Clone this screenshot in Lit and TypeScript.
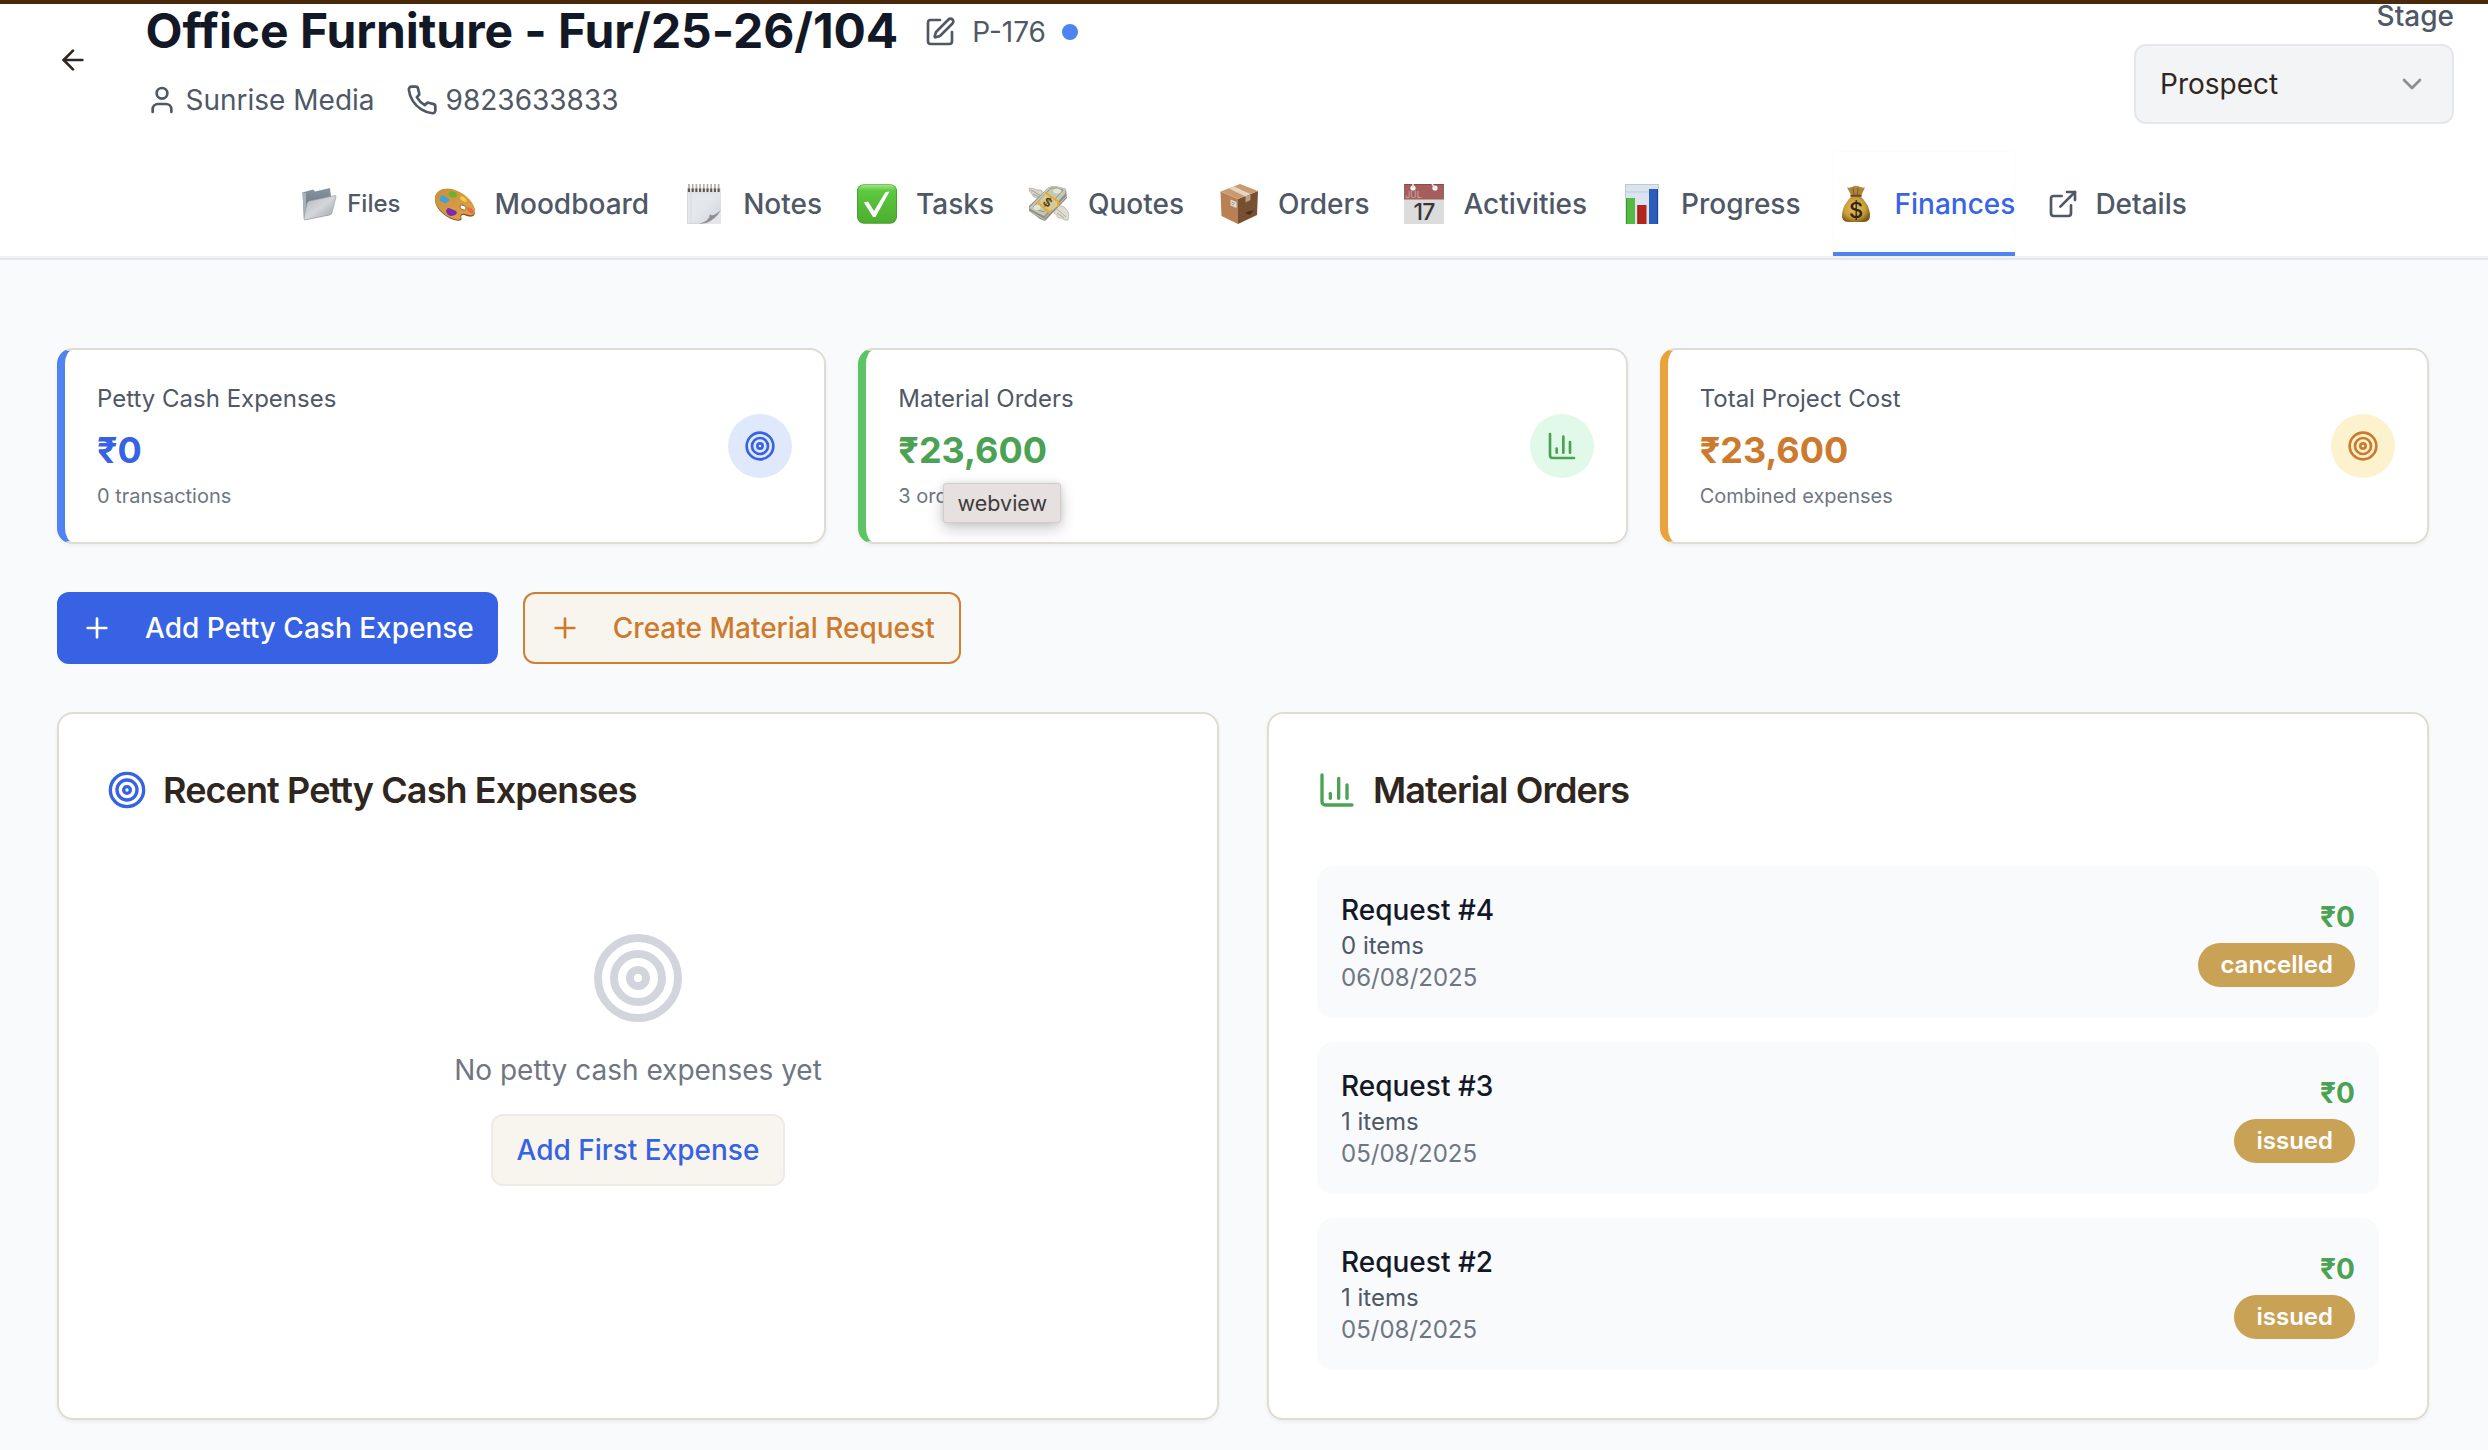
import { LitElement, html, svg, css } from "lit";
import { customElement } from "lit/decorators.js";

const stroke = (body: unknown, cls = "") => html`
  <svg class="icon ${cls}" viewBox="0 0 24 24" fill="none" stroke="currentColor"
    stroke-width="2" stroke-linecap="round" stroke-linejoin="round">${body}</svg>`;

const target = svg`<circle cx="12" cy="12" r="10"/><circle cx="12" cy="12" r="6"/><circle cx="12" cy="12" r="2"/>`;
const chart = svg`<path d="M3 3v16a2 2 0 0 0 2 2h16"/><path d="M18 17V9"/><path d="M13 17V5"/><path d="M8 17v-3"/>`;
const plus = svg`<path d="M5 12h14"/><path d="M12 5v14"/>`;
const arrowLeft = svg`<path d="m12 19-7-7 7-7"/><path d="M19 12H5"/>`;
const user = svg`<path d="M19 21v-2a4 4 0 0 0-4-4H9a4 4 0 0 0-4 4v2"/><circle cx="12" cy="7" r="4"/>`;
const phone = svg`<path d="M22 16.92v3a2 2 0 0 1-2.18 2 19.79 19.79 0 0 1-8.63-3.07 19.5 19.5 0 0 1-6-6 19.79 19.79 0 0 1-3.07-8.67A2 2 0 0 1 4.11 2h3a2 2 0 0 1 2 1.72 12.84 12.84 0 0 0 .7 2.81 2 2 0 0 1-.45 2.11L8.09 9.91a16 16 0 0 0 6 6l1.27-1.27a2 2 0 0 1 2.11-.45 12.84 12.84 0 0 0 2.81.7A2 2 0 0 1 22 16.92z"/>`;
const pen = svg`<path d="M12 3H5a2 2 0 0 0-2 2v14a2 2 0 0 0 2 2h14a2 2 0 0 0 2-2v-7"/><path d="M18.375 2.625a1 1 0 0 1 3 3l-9.013 9.014a2 2 0 0 1-.853.505l-2.873.84a.5.5 0 0 1-.62-.62l.84-2.873a2 2 0 0 1 .506-.852z"/>`;
const external = svg`<path d="M15 3h6v6"/><path d="M10 14 21 3"/><path d="M18 13v6a2 2 0 0 1-2 2H5a2 2 0 0 1-2-2V8a2 2 0 0 1 2-2h6"/>`;
const chevron = svg`<path d="m6 9 6 6 6-6"/>`;

const picture = (body: unknown) => html`<svg class="picture" viewBox="0 0 44 40">${body}</svg>`;

const folder = html`<svg class="folder" viewBox="0 0 36 34">
  <defs>
    <linearGradient id="fb" x1="0" y1="0" x2="0" y2="1"><stop offset="0" stop-color="#8795a0"/><stop offset="1" stop-color="#5a6b78"/></linearGradient>
    <linearGradient id="ff" x1="0" y1="0" x2="1" y2="1"><stop offset="0" stop-color="#b3b8be"/><stop offset=".5" stop-color="#d4d6da"/><stop offset="1" stop-color="#999ea7"/></linearGradient>
  </defs>
  <path d="M1.500 5.500 12 2.500 14 4.500 29 1 30 10 28 28 3 32.500z" fill="url(#fb)"/>
  <path d="M1.500 5.500 3 32.500 5 30V6z" fill="#a9b2ba"/>
  <path d="M6 16 Q6.500 14.500 8.500 14L34 8.500Q35.200 8.500 35 10L31 25.500Q30.500 27.500 28.500 28L4 33Q2.600 33 3 31z" fill="url(#ff)" stroke="#8e959d" stroke-width=".6"/>
</svg>`;

const palette = svg`
  <defs><linearGradient id="pl" x1="0" y1="0" x2="1" y2="1"><stop offset="0" stop-color="#c98f3c"/><stop offset="1" stop-color="#e0a34d"/></linearGradient></defs>
  <path d="M2 14C3 7 11 3.500 19 5.500 31 8.500 42 19 42 28 42 34 36 33 32.500 31.500 29 30.500 27.500 31.500 28.500 34 29.500 36.500 26 37.500 21 36 10 32.500 1 23 2 14z" fill="#84551d"/>
  <path d="M2 13C3 6.500 11 3 19 5 31 8 42 18.500 42 27 42 32.500 36 31.500 32.500 30 29 29 26.500 30.500 27.500 33 28.500 35.500 26 36.500 21 35 10 31.500 1 22 2 13z" fill="url(#pl)"/>
  <ellipse cx="30" cy="23.500" rx="3.300" ry="2.200" transform="rotate(25 30 23.500)" fill="#fff" stroke="#875719" stroke-width=".8"/>
  <path d="M16 9q1-3 4-1.500l3 1q2 4-1 5.500l-4-1q-3-1-2-4z" fill="#68b52c"/>
  <path d="M7 14q1-4 4-2l4 2q3 2 0 3.500l-2 2-3-1q-4-1-3-4.500z" fill="#40a3d7"/>
  <path d="M13 27q1-4 4-2.500l5 2q3 1 1 4l-4 1.500q-5 0-6-5z" fill="#7b2bab"/>
  <path d="M27 13q2-2 5 1 3 4 1 4-6-1-6-5z" fill="#f0cf39"/>
  <path d="M34 24q2-2 5 1 3 4 1 5-6-2-6-6z" fill="#ea694a"/>`;

const notepad = svg`
  <defs><linearGradient id="np" x1="0" y1="0" x2="1" y2="1"><stop offset=".5" stop-color="#e4e7ec"/><stop offset="1" stop-color="#cfd2d8"/></linearGradient></defs>
  <path d="M5 4H39V26L24 40H5z" fill="url(#np)"/>
  <path d="M5.500 4V39.500H24" fill="none" stroke="#d3d6db" stroke-width="1"/>
  <path d="M5 9H39M9 9V39" stroke="#d5d8df" stroke-width=".7"/>
  <path d="M39 26 38 40H16Q24 38 27 31 31 34 39 26z" fill="#dadcdf"/>
  <path d="M39 26Q30 34 28 30 28 37 17 40L24 39Q33 36 39 26z" fill="#8d8f92"/>
  <path d="M39 27Q34 36 23 40H39z" fill="#e4e6e9"/>
  ${[7, 10.700, 14.400, 18.100, 21.800, 25.500, 29.200, 32.900, 36.600].map(x => svg`<path d="M${x} 0V7" stroke="#b0aca7" stroke-width="1.700"/><path d="M${x} 4.500V8" stroke="#5e564e" stroke-width="2.100"/>`)}`;

const check = svg`
  <defs><linearGradient id="ck" x1="0" y1="0" x2="0" y2="1"><stop offset="0" stop-color="#a0e783"/><stop offset=".16" stop-color="#5cc83f"/><stop offset="1" stop-color="#4dae2e"/></linearGradient></defs>
  <rect x="2" y=".2" width="40" height="39.600" rx="7" fill="#3f9d2a"/>
  <rect x="2.800" y=".8" width="38.400" height="38" rx="6.500" fill="url(#ck)"/>
  <path d="M9 18.500 13 17.500 19 27 30.500 8 34.500 7.500 20.500 33H18z" fill="#fff"/>`;

const cash = svg`
  <path d="M2 4Q7 4 10 6 16 5 17 10L18 14 13 18Q10 17 10 14 5 13 5 10 2 9 2 4z" fill="#d6d2c8" stroke="#aaa69a" stroke-width=".6"/>
  <path d="M4 6 14 12M6 10 14 14" stroke="#9b968a" stroke-width=".8"/>
  <path d="M31 22Q37 21 39 25 43 28 41 36 37 37 35 34 30 35 30 31 26 30 27 26z" fill="#dfdcd4" stroke="#aaa69a" stroke-width=".6"/>
  <path d="M30 25 39 33M30 29 37 34" stroke="#a39e93" stroke-width=".8"/>
  <path d="M22 3Q30 1 39 5L40 14 18 37Q13 36 9 32L2 27V22z" fill="#8f9284"/>
  <path d="M22 3Q30 1 39 5L38 10 17 32Q10 29 2 24z" fill="#c5c7b5"/>
  <path d="M24 4Q30 3 36 6L17 28Q10 26 6 23z" fill="none" stroke="#8a8d7b" stroke-width=".8"/>
  <ellipse cx="30" cy="7" rx="4" ry="2.500" fill="#e4e4d8"/><ellipse cx="10" cy="23.500" rx="3.600" ry="2.500" fill="#e4e4d8"/>
  <path d="M2 27 18 35.500M18 33.500 40 12" stroke="#c7c9bb" stroke-width=".9"/>
  <path d="M19 9 30 17V22L22 29 11 19z" fill="#d8c99a"/>
  <path d="M18 8.500 31 17.500V23" fill="none" stroke="#e3ac2c" stroke-width="2"/>
  <path d="M10 17.500 22 28 25 26" fill="none" stroke="#e3ac2c" stroke-width="2"/>
  <text x="20.500" y="22.500" text-anchor="middle" transform="rotate(35 20.500 18.500)" font-family="Inter, sans-serif" font-size="12" font-weight="700" fill="#594616">$</text>`;

const box = svg`
  <path d="M3.500 7.500 21 15V40L4.500 32z" fill="#ba8053"/>
  <path d="M41 7 21 15V40L40 31z" fill="#765030"/>
  <path d="M3.500 7.500 23 0 41 7 21 15z" fill="#c99a70"/>
  <path d="M12 4.500 17 2.500 33.500 10 28.500 12.500z" fill="#e8d5bd"/>
  <path d="M28.500 12.500 33.500 10.500V16L28.500 18.500z" fill="#b8a089"/>
  <path d="M13.500 15.500 19.500 18V24L13.500 21.500z" fill="#e1dcd8"/>
  <path d="M14.500 18 18 19.500M14.500 20 17 21" stroke="#858585" stroke-width=".8"/>
  <path d="M28 29 31 27.500 34 27 37 26 33 31z" fill="#48301c"/>`;

const calendar = svg`
  <rect x="2" y="0" width="40" height="40" fill="#dcdcdc"/>
  <rect x="2" y="0" width="40" height="15.500" fill="#a65e5d"/>
  <path d="M2 .5H42" stroke="#884c4b"/>
  <circle cx="11" cy="4" r="2.600" fill="#fff"/><circle cx="33" cy="4" r="2.600" fill="#fff"/>
  <path d="M11 0V4M30 0 33 4" stroke="#e3e0df" stroke-width="1.600"/>
  <text x="3.500" y="13.500" font-family="Inter, sans-serif" font-size="8.500" font-weight="400" fill="#d4a7a6">JUL</text>
  <text x="22" y="36" text-anchor="middle" font-family="Inter, sans-serif" font-size="23" font-weight="500" letter-spacing="-.8" fill="#373737">17</text>`;

const bars = svg`
  <rect x="5" y="0" width="34" height="40" fill="#dbe4ee"/>
  <path d="M5 .5H39M5.500 0V14M5 8H39M38.500 0V5" stroke="#bccad8" stroke-width="1"/>
  <rect x="6" y="14" width="9" height="26" fill="#56ba42"/><rect x="17.500" y="21" width="9" height="19" fill="#b5251b"/>
  <rect x="29" y="5" width="9" height="35" fill="#2a5dbc"/>
  <path d="M6.500 14V40" stroke="#3d922e"/><path d="M18 21V40" stroke="#871812"/><path d="M37.500 5V40" stroke="#1b4590"/>`;

const moneybag = svg`
  <defs><radialGradient id="mb" cx=".45" cy=".45" r=".6"><stop offset="0" stop-color="#e4c062"/><stop offset=".65" stop-color="#c79c39"/><stop offset="1" stop-color="#805b19"/></radialGradient></defs>
  <path d="M13 3.500Q17 4 19 2.500 22 1 25 2.500 28 4 31 3.500L27 12H17.500z" fill="#b0853c"/>
  <path d="M19 4 20 11M24 4 23.500 11" stroke="#7b5821" stroke-width="1"/>
  <path d="M17.500 12.500H26.500Q35 20 36 30 36.500 38 30 38H14Q7.500 38 8 30 9 20 17.500 12.500z" fill="url(#mb)"/>
  <path d="M16.500 11.800H27.500" stroke="#654815" stroke-width="2"/>
  <text x="22" y="33.500" text-anchor="middle" font-family="Inter, sans-serif" font-size="22" font-weight="500" fill="#2f2511">$</text>`;

const tabs = [
  { label: "Moodboard", art: palette },
  { label: "Notes", art: notepad },
  { label: "Tasks", art: check },
  { label: "Quotes", art: cash },
  { label: "Orders", art: box },
  { label: "Activities", art: calendar },
  { label: "Progress", art: bars },
  { label: "Finances", art: moneybag, active: true },
];

const stats = [
  { tone: "blue", label: "Petty Cash Expenses", value: "₹0", note: "0 transactions", icon: target },
  { tone: "green", label: "Material Orders", value: "₹23,600", note: "3 orders", icon: chart, tip: "webview" },
  { tone: "amber", label: "Total Project Cost", value: "₹23,600", note: "Combined expenses", icon: target },
];

const orders = [
  { name: "Request #4", items: "0 items", date: "06/08/2025", amount: "₹0", status: "cancelled" },
  { name: "Request #3", items: "1 items", date: "05/08/2025", amount: "₹0", status: "issued" },
  { name: "Request #2", items: "1 items", date: "05/08/2025", amount: "₹0", status: "issued" },
];

@customElement("app-root")
export class AppRoot extends LitElement {
  static styles = css`
    :host {
      display: block; box-sizing: border-box; height: 1450px; overflow: hidden;
      background: #f9fafc; color: #2f2620;
      font: 400 28px/40px Inter, "Liberation Sans", sans-serif;
    }
    * { box-sizing: border-box; }
    svg { display: block; flex: none; }
    .icon { width: 32px; height: 32px; }
    .s40 { width: 40px; height: 40px; }
    .s96 { width: 96px; height: 96px; }

    header { background: #fff; border-top: 4px solid #4b290d; border-bottom: 2px solid #e5e7ea; height: 260px; box-shadow: inset 0 -2px #f1f3f5; }
    .top { display: flex; height: 148px; padding: 0 34px 0 57px; }
    .back { padding-top: 40px; width: 88.500px; }
    .who { flex: 1; }
    .titleline { display: flex; align-items: center; height: 56px; white-space: nowrap; }
    h1 { margin: -2px 0 0; font-size: 48px; line-height: 54px; font-weight: 700; letter-spacing: -.06px; color: #121826; }
    .edit { margin-left: 26px; color: #4f5866; }
    .code { margin-left: 16px; color: #4f5866; }
    .dot { width: 16px; height: 16px; border-radius: 50%; background: #4f83f1; margin-left: 16px; }
    .contact { display: flex; align-items: center; gap: 31px; height: 40px; margin-top: 20px; color: #4f5866; }
    .pair { display: flex; align-items: center; gap: 8px; }
    .stage { width: 320px; display: flex; flex-direction: column; align-items: flex-end; font-weight: 500; color: #4f5866; line-height: 24px; }
    .select {
      width: 320px; height: 80px; margin-top: 16px; padding: 0 24px; display: flex; align-items: center; justify-content: space-between;
      border: 2px solid #e5e7ea; border-radius: 12px; background: #f3f4f6; color: #2f2620; font-weight: 400;
    }
    .select .icon { opacity: .5; }

    nav { display: flex; justify-content: center; gap: 32px; height: 104px; font-weight: 500; color: #4f5866; }
    .tab { display: flex; align-items: center; gap: 16px; white-space: nowrap; border-bottom: 4px solid transparent; padding-top: 4px; }
    .tab.small { font-size: 24px; gap: 10px; }
    .tab.active { color: #3864e6; border-bottom-color: #4f83f1; box-shadow: 0 0 2px rgba(0, 0, 0, .06); }
    .picture { width: 46px; height: 40px; }
    .folder { width: 36px; height: 34px; }

    main { padding: 88px 59px 0 57px; }
    .stats { display: grid; grid-template-columns: repeat(3, 1fr); gap: 32px; }
    .stat {
      position: relative; height: 196px; padding: 32px; display: flex; align-items: center; justify-content: space-between;
      background: #fff; border: 2px solid #e0dcd4; border-left-width: 8px; border-radius: 16px; box-shadow: 0 2px 4px rgba(0, 0, 0, .05);
    }
    .stat .label { font-size: 24px; line-height: 32px; color: #4f5866; }
    .stat .value { font-size: 36px; line-height: 48px; margin-top: 11px; font-weight: 700; }
    .stat .note { font-size: 20px; line-height: 28px; margin-top: 8px; color: #6f7683; }
    .disc { width: 64px; height: 64px; border-radius: 50%; display: grid; place-items: center; }
    .stat.blue { border-left-color: #4f83f1; }
    .stat.green { border-left-color: #5dc466; }
    .stat.amber { border-left-color: #eaa23b; }
    .blue .value, .blue .disc { color: #3662e3; }
    .green .value, .green .disc { color: #4ba254; }
    .amber .value, .amber .disc { color: #cc7b2e; }
    .blue .disc { background: #dfe9fb; }
    .green .disc { background: #e1f9e8; }
    .amber .disc { background: #fcf2cd; }
    .tip {
      position: absolute; left: 77px; top: 133px; width: 118px; height: 40px; border: 1px solid #d2cccc; border-radius: 3px;
      background: #e6e0e0; color: #3e3b3b; font-size: 21.500px; line-height: 38px; text-align: center;
      box-shadow: 0 6px 16px rgba(0, 0, 0, .2), 0 0 6px rgba(0, 0, 0, .1);
    }

    .actions { display: flex; gap: 25px; margin-top: 48px; }
    .btn {
      display: flex; align-items: center; gap: 32px; height: 72px; padding: 0 24px; border-radius: 12px;
      font: inherit; font-weight: 500; white-space: nowrap; border: 0;
    }
    .btn.primary { background: #3662e3; color: #fff; }
    .btn.outline { background: #f8f5ee; color: #cc7b2e; border: 2px solid #d07f34; }
    .btn.ghost { background: #f8f5ee; color: #3662e3; border: 2px solid #edebe5; }

    .panels { display: grid; grid-template-columns: 1fr 1fr; gap: 48px; margin-top: 48px; }
    .panel { height: 708px; padding: 48px; background: #fff; border: 2px solid #e0dcd2; border-radius: 16px; box-shadow: 0 2px 4px rgba(0, 0, 0, .05); }
    .head { display: flex; align-items: center; gap: 16px; height: 56px; }
    h2 { margin: 0; font-size: 36px; line-height: 56px; font-weight: 600; letter-spacing: -.025em; white-space: nowrap; }
    .blue-ink { color: #3662e3; }
    .green-ink { color: #4ba254; }
    .empty { display: flex; flex-direction: column; align-items: center; padding-top: 112px; color: #6f7683; }
    .empty .icon { color: #d2d6dc; }
    .empty p { margin: 24px 0; line-height: 40px; }
    .list { display: flex; flex-direction: column; gap: 24px; margin-top: 48px; }
    .row { display: flex; align-items: center; justify-content: space-between; height: 152px; padding: 0 24px; border-radius: 16px; background: #f9fafc; }
    .name { font-weight: 500; color: #121826; line-height: 40px; }
    .items, .date { font-size: 24px; line-height: 32px; color: #4f5866; }
    .date { color: #6f7683; }
    .sum { display: flex; flex-direction: column; align-items: flex-end; }
    .amount { font-weight: 700; color: #4ba254; line-height: 40px; }
    .badge { margin-top: 6px; height: 44px; line-height: 44px; padding: 0 22px; border-radius: 22px; background: #c9a256; color: #fff; font-size: 24px; font-weight: 600; }
  `;

  render() {
    return html`
      <header>
        <div class="top">
          <div class="back">${stroke(arrowLeft)}</div>
          <div class="who">
            <div class="titleline">
              <h1>Office Furniture - Fur/25-26/104</h1>
              ${stroke(pen, "edit")}
              <span class="code">P-176</span>
              <span class="dot"></span>
            </div>
            <div class="contact">
              <span class="pair">${stroke(user)}<span>Sunrise Media</span></span>
              <span class="pair">${stroke(phone)}<span>9823633833</span></span>
            </div>
          </div>
          <div class="stage">
            <span>Stage</span>
            <div class="select"><span>Prospect</span>${stroke(chevron)}</div>
          </div>
        </div>
        <nav>
          <div class="tab small">${folder}<span>Files</span></div>
          ${tabs.map(t => html`<div class="tab ${t.active ? "active" : ""}">${picture(t.art)}<span>${t.label}</span></div>`)}
          <div class="tab">${stroke(external)}<span>Details</span></div>
        </nav>
      </header>
      <main>
        <section class="stats">
          ${stats.map(s => html`
            <div class="stat ${s.tone}">
              <div>
                <div class="label">${s.label}</div>
                <div class="value">${s.value}</div>
                <div class="note">${s.note}</div>
              </div>
              <div class="disc">${stroke(s.icon)}</div>
              ${s.tip ? html`<div class="tip">${s.tip}</div>` : ""}
            </div>`)}
        </section>
        <div class="actions">
          <button class="btn primary">${stroke(plus)}<span>Add Petty Cash Expense</span></button>
          <button class="btn outline">${stroke(plus)}<span>Create Material Request</span></button>
        </div>
        <section class="panels">
          <div class="panel">
            <div class="head">${stroke(target, "s40 blue-ink")}<h2>Recent Petty Cash Expenses</h2></div>
            <div class="empty">
              ${stroke(target, "s96")}
              <p>No petty cash expenses yet</p>
              <button class="btn ghost">Add First Expense</button>
            </div>
          </div>
          <div class="panel">
            <div class="head">${stroke(chart, "s40 green-ink")}<h2>Material Orders</h2></div>
            <div class="list">
              ${orders.map(o => html`
                <div class="row">
                  <div>
                    <div class="name">${o.name}</div>
                    <div class="items">${o.items}</div>
                    <div class="date">${o.date}</div>
                  </div>
                  <div class="sum"><span class="amount">${o.amount}</span><span class="badge">${o.status}</span></div>
                </div>`)}
            </div>
          </div>
        </section>
      </main>`;
  }
}
